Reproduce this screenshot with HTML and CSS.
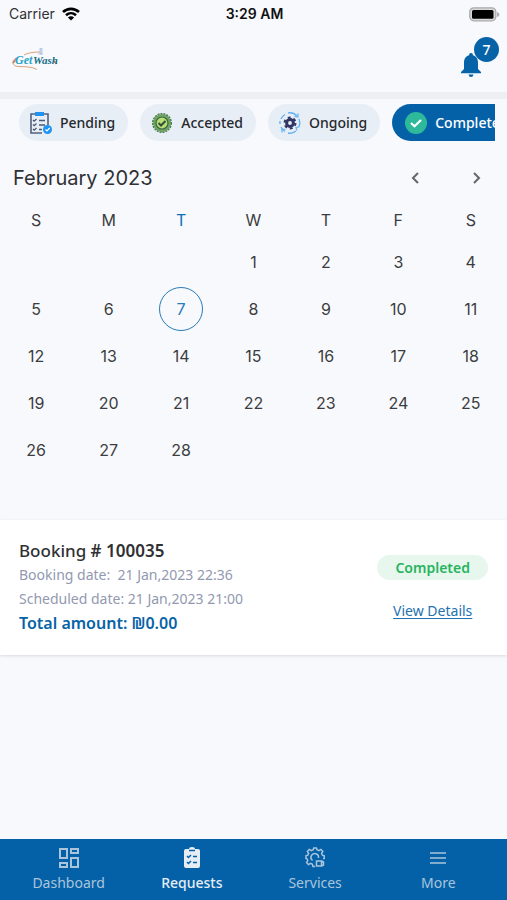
FILE: index.html
```html
<!DOCTYPE html>
<html lang="en">
<head>
<meta charset="utf-8">
<meta name="viewport" content="width=device-width, initial-scale=1">
<title>Requests</title>
<link rel="stylesheet" href="styles.css">
</head>
<body>
<div class="status">
  <div class="carrier">Carrier
    <svg width="18" height="14" viewBox="0 0 18 14" fill="none" stroke="#000" stroke-width="2.6"><path d="M1 5C5.500 .8 12.500 .8 17 5M4 8.300c3-2.800 7-2.800 10 0"/><path d="M9 13.500 5.900 10.400c1.800-1.600 4.400-1.600 6.200 0z" fill="#000" stroke="none"/></svg>
  </div>
  <div class="time">3:29 AM</div>
  <svg class="battery" width="31" height="15" viewBox="0 0 31 15"><rect x=".8" y=".8" width="26" height="13" rx="4" fill="#d8d8d8" stroke="#aaa" stroke-width="1.300"/><rect x="3" y="3" width="21.500" height="8.800" rx="1.500"/><path d="M28 5v5q2-.5 2.500-2.500Q30 5.500 28 5z" fill="#aaa"/></svg>
</div>
<header class="header">
  <svg class="logo" width="46" height="24" viewBox="0 0 46 24" role="img" aria-label="Get Wash">
    <path d="M4 10C-1 13 0 18 6 18.500q9 0 14 1l5 2M12 7q5-3 16-3" fill="none" stroke="#d9a27a"/>
    <path d="M28 0h2v6h-2zM26 6h5" fill="#cfdcf5" stroke="#a7bce4" stroke-width=".7"/>
    <path d="M1 15l4-5M42 13l2.500 3" stroke="#c2784a" stroke-width="1.500"/>
    <text class="logo-get" x="3" y="16">Get</text><text class="logo-wash" x="21" y="16">Wash</text>
  </svg>
  <button class="bell" aria-label="Notifications">
    <svg width="20" height="24" viewBox="0 0 20 24" fill="#0763a8"><path d="M10 0q2 0 2 2.300C15.800 3.500 17 6.500 17 10v6l3 3v1.200H0V19l3-3v-6c0-3.500 1.200-6.500 5-7.700Q8 0 10 0zM7.500 21.500h5Q12 24 10 24t-2.500-2.500z"/></svg>
    <span class="badge">7</span>
  </button>
</header>
<main>
<div class="chips">
  <button class="chip">
    <svg width="24" height="24" viewBox="0 0 24 24" fill="none"><path d="M6 3H2v19h11M15 3h4v11" stroke="#53617e" stroke-width="1.600"/><path d="M6 1h9v4H6z" fill="#1f92f2"/><path d="m4 9 1.200 1.200L7.500 8M4 13.500l1.200 1.200 2.300-2.200M4 18l1.200 1.200L7.500 17M10 9.500h6M10 14h6M10 18.500h3" stroke="#4b5873" stroke-width="1.300"/><circle cx="18.500" cy="18.500" r="4.500" fill="#1f92f2"/><path d="m16.500 18.500 1.500 1.500 2.700-3" stroke="#fff" stroke-width="1.200"/></svg>
    Pending</button>
  <button class="chip">
    <svg width="24" height="24" viewBox="0 0 24 24" fill="none"><circle cx="12" cy="12" r="9" fill="#6da663"/><circle cx="12" cy="12" r="9.300" stroke="#4f7d50" stroke-width="1.500" stroke-dasharray="2 1"/><circle cx="12" cy="12" r="6" fill="#b9df72" stroke="#42654b" stroke-width="1.200"/><path d="m8.500 12 2.500 2.500L15.500 10" stroke="#30503c" stroke-width="2"/></svg>
    Accepted</button>
  <button class="chip">
    <svg width="24" height="24" viewBox="0 0 24 24" fill="none"><path d="M3 8a10 10 0 0 1 4-4.500M10 2a10 10 0 0 1 9 3M21 8a10 10 0 0 1 0 8M18 20a10 10 0 0 1-8 2M7 20.500A10 10 0 0 1 3 16M2 13v-3" stroke="#62b2f5" stroke-width="1.400"/><path d="M16.500 5.500 20 6V2.500M21 16l-3 .5 1 3M7.500 18.500 4 18v3.500" stroke="#62b2f5" stroke-width="1.200"/><circle cx="12" cy="12" r="3.400" stroke="#303765" stroke-width="3"/><circle cx="12" cy="12" r="5.500" stroke="#303765" stroke-width="2" stroke-dasharray="2.900 2.860"/></svg>
    Ongoing</button>
  <button class="chip active">
    <svg width="24" height="24" viewBox="0 0 24 24" fill="none"><circle cx="12" cy="12" r="11" fill="#2eb99a"/><path d="m7 12 3.500 3.300L17 9" stroke="#fff" stroke-width="2.200"/></svg>
    Completed</button>
</div>
<section class="calendar">
  <div class="month">
    <h1>February 2023</h1>
    <button class="arrow" aria-label="Previous month"><svg width="12" height="14" viewBox="0 0 12 14"><path d="M8 2 3 7l5 5"/></svg></button>
    <button class="arrow" aria-label="Next month"><svg width="12" height="14" viewBox="0 0 12 14"><path d="m3 2 5 5-5 5"/></svg></button>
  </div>
  <table>
    <thead><tr><th>S</th><th>M</th><th class="today-name">T</th><th>W</th><th>T</th><th>F</th><th>S</th></tr></thead>
    <tbody>
      <tr><td></td><td></td><td></td><td>1</td><td>2</td><td>3</td><td>4</td></tr>
      <tr><td>5</td><td>6</td><td><span class="today">7</span></td><td>8</td><td>9</td><td>10</td><td>11</td></tr>
      <tr><td>12</td><td>13</td><td>14</td><td>15</td><td>16</td><td>17</td><td>18</td></tr>
      <tr><td>19</td><td>20</td><td>21</td><td>22</td><td>23</td><td>24</td><td>25</td></tr>
      <tr><td>26</td><td>27</td><td>28</td><td></td><td></td><td></td><td></td></tr>
    </tbody>
  </table>
</section>
<article class="booking">
  <div class="info">
    <h2>Booking <b># 100035</b></h2>
    <p>Booking date:&nbsp; 21 Jan,2023 22:36</p>
    <p>Scheduled date: 21 Jan,2023 21:00</p>
    <p class="total">Total amount: ₪0.00</p>
  </div>
  <div class="side">
    <span class="state">Completed</span>
    <a class="details" href="#details">View Details</a>
  </div>
</article>
</main>
<nav class="tabs">
  <a href="#dashboard"><svg width="24" height="24" viewBox="0 0 24 24" fill="none" stroke="currentColor" stroke-width="2"><path d="M3 3h7v9H3zM14 3h7v4h-7zM3 17h7v4H3zM14 12h7v9h-7z"/></svg>Dashboard</a>
  <a href="#requests" class="current"><svg width="24" height="24" viewBox="0 0 24 24" fill="none"><path d="M6 3h3q0-2 3-2t3 2h3q2 0 2 2v15q0 2-2 2H6q-2 0-2-2V5q0-2 2-2z" fill="currentColor"/><path d="M9 4.500h6M7 10l1.500 1.500L11 9M7 16l1.500 1.500L11 15M13 10.500h4M13 16.500h4" stroke="#0561a7" stroke-width="1.500"/></svg>Requests</a>
  <a href="#services"><svg width="24" height="24" viewBox="0 0 24 24" fill="none" stroke="currentColor" stroke-width="1.500"><path d="M12 20.500h-2l-.6-2.300-1.900-.8-2 1.200-1.900-1.900 1.200-2-.8-1.900-1-.3V9.800l1.800-.6.8-1.900-1.200-2L6.300 3.400l2 1.200 1.900-.8.6-1.800h2.600l.6 1.800 1.900.8 2-1.200 1.900 1.900-1.200 2 .8 1.900 1.800.6v2.700l-1 .3"/><path d="M9.500 14.500a3.800 3.800 0 1 1 6-2.500M13.500 15h5v5h-5zM18.500 15l2 1v3l-2 1"/></svg>Services</a>
  <a href="#more"><svg width="24" height="24" viewBox="0 0 24 24" fill="none" stroke="currentColor" stroke-width="1.600"><path d="M4 7h16M4 12h16M4 17h16"/></svg>More</a>
</nav>
</body>
</html>
```
FILE: styles.css
```css
* { box-sizing: border-box; }
body {
  margin: 0;
  min-height: 100vh;
  display: flex;
  flex-direction: column;
  background: #f8f9fd;
  color: #303134;
  font-family: "Noto Sans", sans-serif;
}
button { border: 0; margin: 0; padding: 0; background: none; font: inherit; color: inherit; }
h1, h2, p { margin: 0; }
svg { display: block; flex: none; }

.status {
  display: grid;
  grid-template-columns: 1fr auto 1fr;
  align-items: center;
  height: 28px;
  padding: 0 7px 0 9px;
  font: 14px/28px Inter, sans-serif;
}
.carrier { display: flex; align-items: center; gap: 7px; }
.time { font-weight: 600; color: #111; }
.battery { justify-self: end; }

.header {
  display: flex;
  align-items: center;
  justify-content: space-between;
  height: 64px;
  padding: 0 26px 0 12px;
  box-shadow: 0 7px 1px #eeeff3;
}
.logo-get, .logo-wash { font: italic bold 12px "Liberation Serif", serif; }
.logo-get { fill: #2aa5c9; }
.logo-wash { font-size: 11px; fill: #176f88; }
.bell { position: relative; padding-top: 10px; }
.badge {
  position: absolute;
  top: -6px;
  left: 13px;
  width: 25px;
  border-radius: 50%;
  background: #0763a8;
  color: #fff;
  font-size: 14px;
  font-weight: 500;
  line-height: 25px;
  text-align: center;
}

.chips {
  display: flex;
  gap: 12px;
  margin: 12px 12px 0 0;
  padding-left: 19px;
  overflow: hidden;
}
.chip {
  display: flex;
  flex: none;
  align-items: center;
  gap: 7px;
  height: 37px;
  padding: 0 13px 0 10px;
  border-radius: 19px;
  background: #e8eef5;
  color: #25282d;
  font-size: 14px;
  font-weight: 500;
}
.chip.active { background: #0561a7; color: #fff; padding-left: 12px; }

.calendar { font-family: Inter, sans-serif; }
.month { display: flex; align-items: center; height: 67px; padding: 7px 15px 0 13px; }
.month h1 { flex: 1; font-size: 20px; font-weight: 400; }
.arrow { display: flex; align-items: center; justify-content: center; width: 31px; height: 40px; }
.arrow + .arrow { margin-left: 30px; }
.arrow path { fill: none; stroke: #666; stroke-width: 2; }
table { width: 100%; table-layout: fixed; border-collapse: collapse; text-align: center; font-size: 16px; color: #3c3d40; }
th { height: 24px; padding: 0; font-weight: 400; }
td { height: 47px; padding: 0; }
tbody tr:first-child td { padding-top: 6px; height: 53px; }
.today-name { color: #0d6fb5; }
.today {
  display: block;
  width: 44px;
  margin: 0 auto;
  border: 1px solid #2a7bb8;
  border-radius: 50%;
  color: #2a7bb8;
  line-height: 42px;
}

.booking {
  display: flex;
  justify-content: space-between;
  margin-top: 47px;
  padding: 19px 19px 20px;
  background: #fff;
  box-shadow: 0 1px 3px #d9dbe0;
}
.info { font-size: 14px; line-height: 24px; color: #9299b0; }
.info h2 { font-size: 17px; font-weight: 500; color: #303134; }
.info b { font-weight: 600; }
.info .total { font-size: 16px; font-weight: 600; color: #0763a8; }
.side { display: flex; flex-direction: column; align-items: center; gap: 20px; padding-top: 16px; }
.state {
  padding: 0 18px;
  border-radius: 13px;
  background: #e7f7ed;
  color: #27b461;
  font-size: 14px;
  font-weight: 600;
  line-height: 25px;
}
.details { color: #2472b0; font-size: 14px; line-height: 22px; text-underline-offset: 2px; }

.tabs {
  display: grid;
  grid-template-columns: repeat(4, 1fr);
  margin-top: auto;
  padding: 7px 7px 6px;
  background: #0561a7;
}
.tabs a {
  display: flex;
  flex-direction: column;
  align-items: center;
  gap: 2px;
  color: #a9c5dc;
  font-size: 14px;
  line-height: 22px;
  text-decoration: none;
}
.tabs .current { color: #e6edf4; font-weight: 500; }
```
